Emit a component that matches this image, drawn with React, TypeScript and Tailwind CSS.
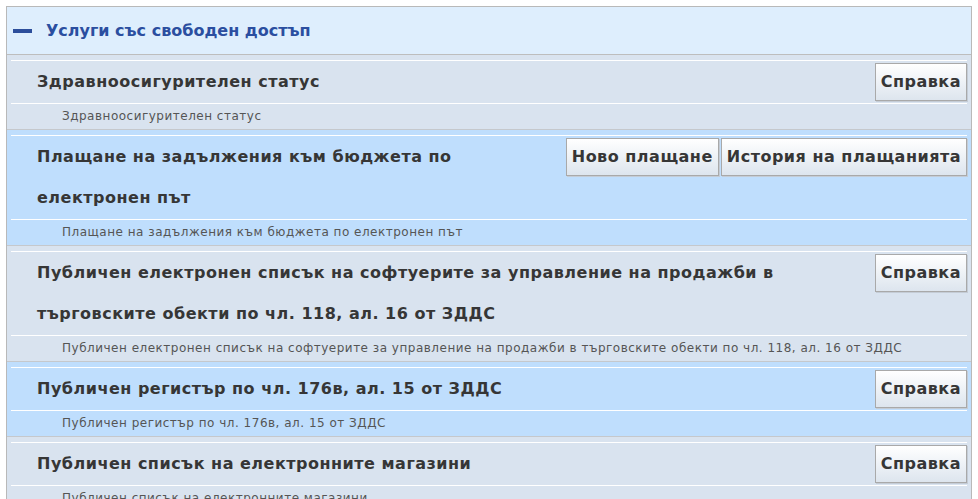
const services = [
  {
    title: "Здравноосигурителен статус",
    description: "Здравноосигурителен статус",
    actions: ["Справка"],
    tone: "gray",
  },
  {
    title: "Плащане на задължения към бюджета по електронен път",
    description: "Плащане на задължения към бюджета по електронен път",
    actions: ["Ново плащане", "История на плащанията"],
    tone: "blue",
  },
  {
    title: "Публичен електронен списък на софтуерите за управление на продажби в търговските обекти по чл. 118, ал. 16 от ЗДДС",
    description: "Публичен електронен списък на софтуерите за управление на продажби в търговските обекти по чл. 118, ал. 16 от ЗДДС",
    actions: ["Справка"],
    tone: "gray",
  },
  {
    title: "Публичен регистър по чл. 176в, ал. 15 от ЗДДС",
    description: "Публичен регистър по чл. 176в, ал. 15 от ЗДДС",
    actions: ["Справка"],
    tone: "blue",
  },
  {
    title: "Публичен списък на електронните магазини",
    description: "Публичен списък на електронните магазини",
    actions: ["Справка"],
    tone: "gray",
  },
];

function ActionButton({ label }: { label: string }) {
  return (
    <button
      type="button"
      className="h-[38px] border border-[#a9a9a9] bg-gradient-to-b from-white to-[#dde5ee] px-[5px] text-[16px] tracking-[0.5px] font-bold text-[#363636] shadow-[1px_1px_0_#c4ccd6]"
    >
      {label}
    </button>
  );
}

export default function App() {
  return (
    <div
      className="min-h-screen bg-white pl-[6px] pr-[6px] pt-[6px]"
      style={{ fontFamily: '"DejaVu Sans", Verdana, sans-serif' }}
    >
      <div className="border-l border-r border-t border-[#b9b9b9]">
        <div className="flex h-[48px] items-center gap-[14px] border-b border-[#bdbdbd] bg-[#deeefd] pl-[6px]">
          <span className="h-[4px] w-[19px] bg-[#2c4e9b]" />
          <h2 className="text-[16px] font-bold text-[#2b4ea0]">Услуги със свободен достъп</h2>
        </div>

        {services.map((item) => (
          <div
            key={item.title}
            className={
              item.tone === "blue"
                ? "border-b border-[#c5c8cc] bg-[#bfdefd] px-[4px] pt-[5px]"
                : "border-b border-[#c5c8cc] bg-[#d9e3ef] px-[4px] pt-[5px]"
            }
          >
            <div className="flex items-start justify-between gap-[10px] border-t border-b border-white pb-px">
              <h3 className="flex-1 pl-[26px] text-[16px] tracking-[0.5px] leading-[41px] font-bold text-[#363636]">
                {item.title}
              </h3>
              <div className="mt-[2px] flex gap-[2px]">
                {item.actions.map((action) => (
                  <ActionButton key={action} label={action} />
                ))}
              </div>
            </div>
            <p className="h-[25px] pl-[51px] text-[12px] tracking-[0.5px] leading-[25px] text-[#555555]">
              {item.description}
            </p>
          </div>
        ))}
      </div>
    </div>
  );
}
